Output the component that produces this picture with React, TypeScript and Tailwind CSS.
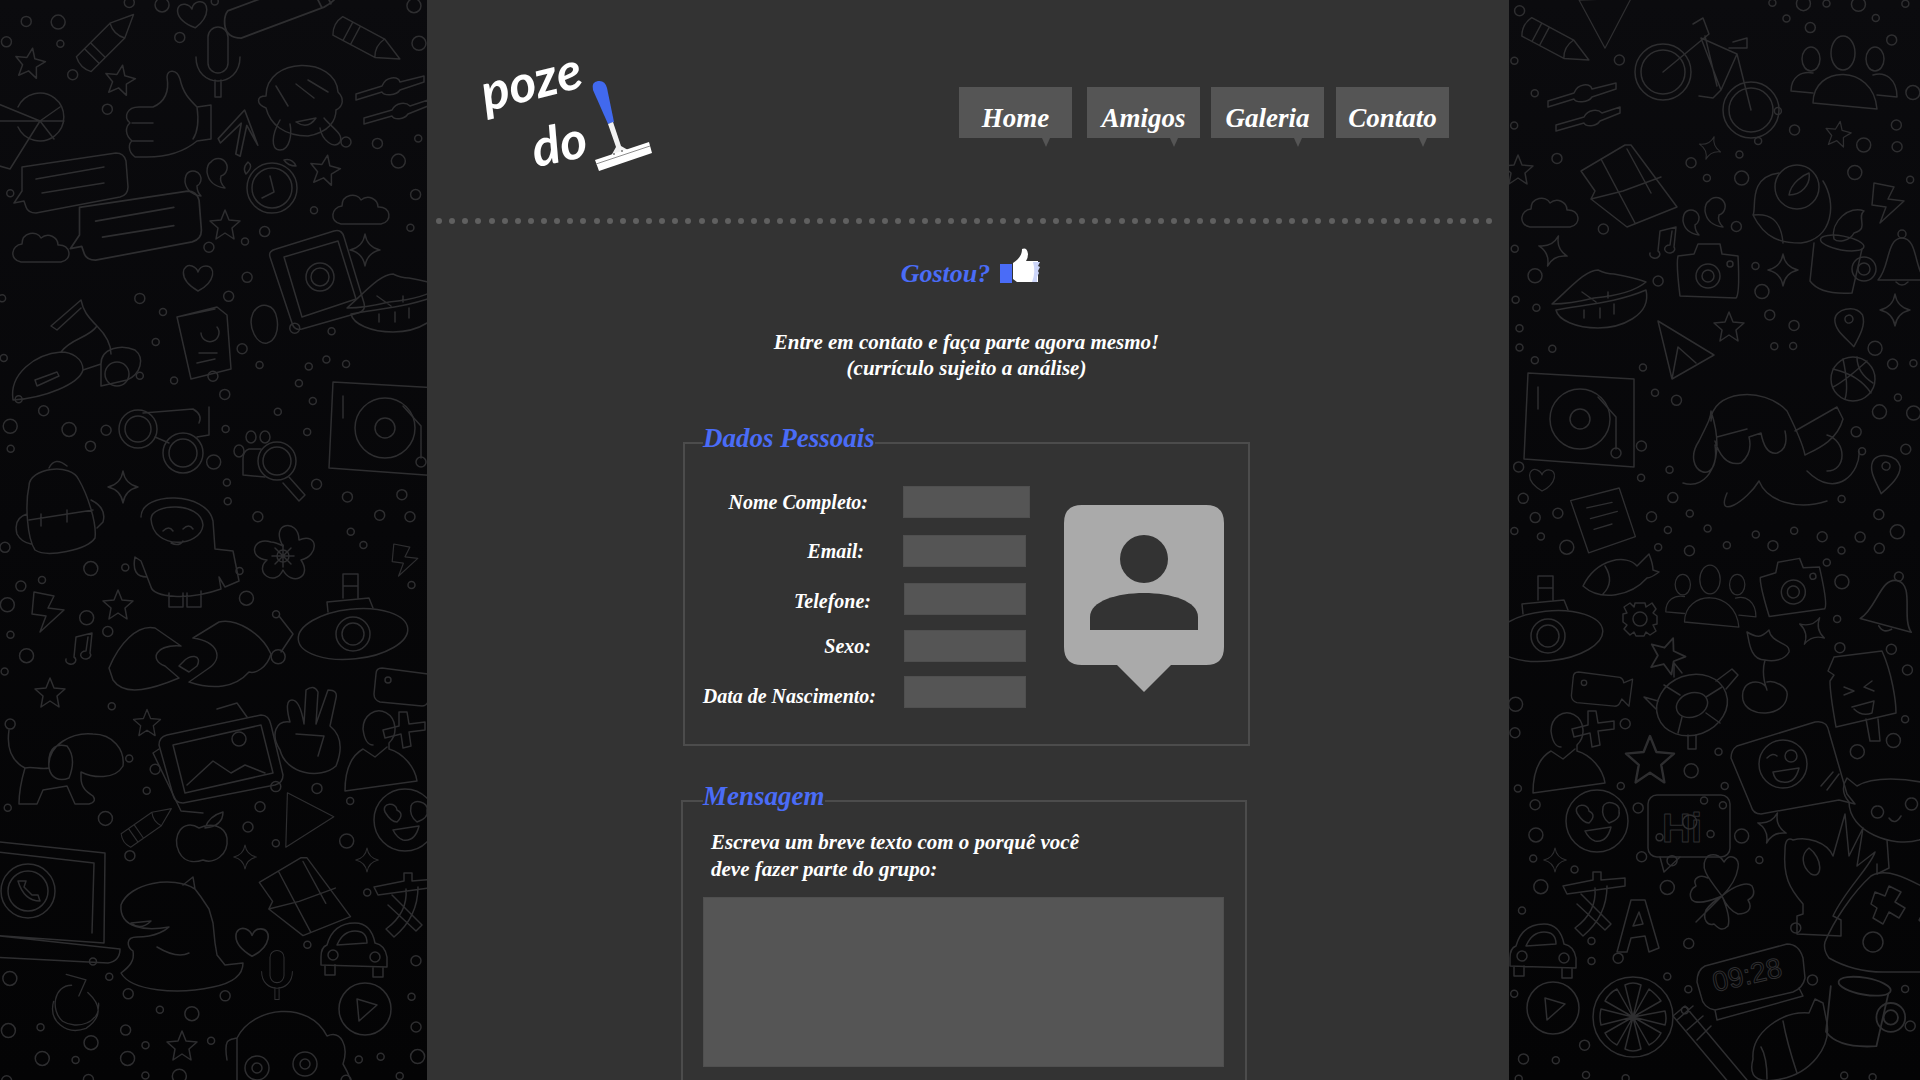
import type { ReactNode } from 'react';

const script = "font-['Liberation_Serif',serif] italic font-bold";

// doodle shapes of the wallpaper, each drawn around 0,0
const shapes: Record<string, { r: number; art: ReactNode }> = {
  star: { r: 16, art: <path d="M0 -15 L4 -5 L15 -4 L7 3 L9 14 L0 8 L-9 14 L-7 3 L-15 -4 L-4 -5Z" /> },
  sparkle: { r: 15, art: <path d="M0 -16 Q2 -3 15 0 Q2 3 0 16 Q-2 3 -15 0 Q-2 -3 0 -16Z" /> },
  heart: { r: 15, art: <path d="M0 13 C-22 0 -15 -15 -6 -12 Q-1 -10 0 -6 Q2 -12 8 -12 C18 -12 18 4 0 13Z" /> },
  cloud: { r: 30, art: <path d="M-22 14 C-34 12 -32 -3 -21 -4 C-21 -16 -6 -18 -2 -10 C5 -16 15 -11 15 -3 C28 -4 30 12 18 14Z" /> },
  pencil: { r: 32, art: <path d="M-36 -11 H14 L38 0 L14 11 H-36 Q-42 0 -36 -11Z M-24 -11 V11 M-15 -11 V11 M14 -11 Q8 0 14 11" /> },
  mic: { r: 32, art: <path d="M-10 -28 a10 10 0 0 1 20 0 V-2 a10 10 0 0 1 -20 0Z M-22 -8 C-22 24 22 24 22 -8 M-3 15 V32 H3 V15" /> },
  thumb: { r: 46, art: <path d="M-26 -8 H-12 C2 -14 4 -26 2 -38 C2 -46 12 -46 15 -36 C18 -22 24 -16 32 -8 L46 -10 V24 L32 26 C20 36 4 42 -18 42 H-30 C-38 36 -36 28 -33 26 C-40 20 -40 12 -35 8 C-42 2 -38 -8 -26 -8Z M-33 8 H-12 M-33 26 H-12 M32 -8 C34 6 32 18 28 24" /> },
  arrow: { r: 22, art: <path d="M-18 6 L6 -20 L18 12 L8 -6 L2 22 L-2 20 L3 -8 L-16 10Z" /> },
  girl: { r: 48, art: <g><path d="M-34 -4 C-34 -44 36 -44 38 -8 C44 -2 44 6 36 10 C36 20 30 32 8 36 C-16 36 -30 24 -34 8 C-44 4 -44 -4 -34 -4Z" /><path d="M-4 -16 L14 -2 M-24 -14 L-12 6 M8 -20 L28 -8 M-20 20 C-28 34 -30 50 -20 50 C-10 50 -8 34 -10 24 M24 18 C32 28 44 34 40 42 C34 50 22 40 20 28 M-4 22 Q8 30 16 18Z" /></g> },
  sliders: { r: 34, art: <path d="M-34 -6 L-8 -14 C-4 -24 8 -24 10 -18 L34 -24 V-18 L10 -10 C6 -4 -6 -4 -8 -8 L-34 0Z M-26 18 L2 10 C6 2 16 2 20 6 L38 0 V6 L18 14 C14 20 4 20 2 16 L-26 24Z" /> },
  cocktail: { r: 42, art: <path d="M-44 -22 L0 -4 L-30 44 L-44 40 M-44 -4 H-1 M0 -4 m-22 -14 a24 24 0 1 1 0 20 M0 -4 L20 -18 M0 -4 L24 -4 M0 -4 L14 14" /> },
  chat: { r: 50, art: <path d="M-50 -18 L44 -32 Q52 -32 54 -24 L56 2 Q56 10 48 12 L-36 28 Q-44 28 -46 22 L-48 16 L-58 18 L-50 6Z M-36 -6 L32 -18 M-30 8 L32 -2" /> },
  phone: { r: 44, art: <g><path d="M-36 -26 L22 -44 Q30 -46 32 -38 L52 28 Q54 36 46 38 L-10 54 Q-18 56 -20 48 L-42 -18 Q-44 -24 -36 -26Z M-28 -18 L26 -34 L44 24 L-10 42Z" /><circle cx="8" cy="2" r="14" /><circle cx="8" cy="2" r="9" /></g> },
  clock: { r: 30, art: <g><circle r="25" /><circle r="20" /><path d="M-2 -12 L2 4 L-10 10 M-24 -26 Q-30 -20 -26 -14 Q-18 -22 -24 -26Z M12 -28 Q20 -30 24 -22 Q16 -22 12 -28Z" /></g> },
  quotes: { r: 22, art: <path d="M-16 -6 a8 8 0 1 1 8 14 Q-8 14 -4 18 Q-18 16 -20 4 Q-20 -4 -16 -6Z M6 -16 a9 9 0 1 1 10 14 Q14 4 20 10 Q4 8 2 -6 Q2 -14 6 -16Z" /> },
  scooter: { r: 62, art: <g><path d="M-62 60 C-66 34 -40 14 -14 12 C-4 12 8 18 8 30 C4 44 -30 58 -62 60Z M-40 40 L-18 32 L-16 36 L-38 46Z M-14 12 C-4 -2 14 -2 22 -14 C12 -24 8 -30 6 -40 L-24 -14 L-18 -10 L6 -32 M22 -14 C30 -6 36 4 36 14 M8 30 L26 24 M26 24 C26 8 46 4 60 10 C70 18 66 34 52 40 L26 46Z" /><circle cx="42" cy="34" r="12" /></g> },
  passport: { r: 28, art: <path d="M-26 -18 L14 -28 L24 -20 L28 34 L-12 44 L-26 -18Z M-26 -18 L12 -26 M-6 28 L12 24 M-2 -2 a9 9 0 1 0 16 -6 M-4 18 H14" /> },
  egg: { r: 18, art: <path d="M-12 -12 C-6 -24 10 -22 12 -6 C14 6 10 16 2 18 C-8 20 -18 2 -12 -12Z" /> },
  lips: { r: 48, art: <path d="M-48 8 C-28 -10 -14 -26 -2 -26 Q6 -22 14 -22 Q36 -18 46 -14 C34 -4 16 0 -6 2 Q-30 8 -48 8Z M-44 14 C-10 8 18 6 46 -6 C52 20 20 32 -2 32 C-24 32 -42 24 -44 14Z M-18 -4 L-4 6 M8 -4 V2 M-16 14 V22 M0 12 V22 M14 8 V18" /> },
  glasses: { r: 42, art: <g><circle cx="-25" cy="-10" r="13" /><circle cx="-25" cy="-10" r="19" /><circle cx="20" cy="14" r="14" /><circle cx="20" cy="14" r="20" /><path d="M-20 -26 L30 -30 Q40 -24 36 -16 M-8 -2 L6 4 M34 -2 L46 -4 V-32" /></g> },
  magnifier: { r: 32, art: <g><circle cx="4" cy="-4" r="14" /><circle cx="4" cy="-4" r="19" /><path d="M16 12 L32 30 L26 36 L10 18 M-12 -16 H-24 Q-30 -14 -30 -6 V10 L-8 12" /><ellipse cx="-34" cy="-14" rx="5" ry="6" /><ellipse cx="-22" cy="-28" rx="5" ry="6" /><ellipse cx="-8" cy="-28" rx="5" ry="6" /></g> },
  turntable: { r: 58, art: <g><path d="M-50 -44 L56 -38 V50 L-54 42Z" /><circle cx="2" cy="2" r="30" /><circle cx="2" cy="2" r="10" /><path d="M-40 -30 V-8 M20 -20 L38 0 V32" /><circle cx="38" cy="36" r="5" /></g> },
  backpack: { r: 50, art: <path d="M-34 -22 C-34 -40 8 -46 16 -28 C24 -14 34 14 32 30 C24 42 -16 50 -28 42 C-36 30 -38 -4 -34 -22Z M-34 12 L30 2 M-22 6 V18 M4 2 V14 M-14 -40 Q-8 -52 4 -42 M-36 6 Q-50 10 -46 26 Q-42 34 -32 36 M28 -8 Q44 0 40 14 L34 20" /> },
  bar: { r: 40, art: <path d="M-46 -4 L36 -22 Q48 -20 50 -10 Q46 0 34 4 L-38 20 Q-50 18 -50 8 Q-50 0 -46 -4Z M24 -20 L32 4 M32 -22 L40 2" /> },
  astro: { r: 46, art: <path d="M-36 -30 C-36 -56 30 -56 36 -26 L38 2 L56 4 L62 34 L48 40 L42 30 L44 42 C10 54 -24 50 -26 40 L-36 14 L-42 10 Q-46 30 -30 30 M-26 -28 C-26 -44 24 -46 26 -22 C24 0 -24 4 -26 -28Z M-14 -16 Q-8 -22 -4 -16 M6 -18 Q12 -24 16 -18 M-6 -4 Q2 0 6 -6 M-8 46 V60 H6 V46 M10 46 V60 H24 V44" /> },
  flower: { r: 32, art: <g><path d="M0 -10 C-14 -34 16 -38 16 -16 C36 -24 36 0 18 4 C30 22 8 30 0 14 C-8 32 -30 16 -16 4 C-36 2 -30 -20 -12 -14 Q-8 -14 0 -10Z" /><circle r="6" /><path d="M-11 0 H11 M0 -11 V11 M-8 -8 L8 8 M8 -8 L-8 8" /></g> },
  sub: { r: 62, art: <g><ellipse rx="55" ry="25" cx="0" cy="0" transform="rotate(-6)" /><circle r="17" /><circle r="11" /><path d="M-25 -22 L-26 -32 L16 -36 L20 -26 M-10 -36 V-60 H5 V-36 M-60 0 L-74 -18 M-60 0 L-72 18 M-10 -48 H5" /></g> },
  bolt: { r: 18, art: <path d="M-14 -20 L6 -16 L0 -4 L16 -2 L-8 20 L-2 4 L-16 2Z" /> },
  note: { r: 16, art: <path d="M-12 12 a5 4 0 1 0 8 -2 L-2 -10 L14 -14 L12 6 a5 4 0 1 1 -4 -2 L10 -10" /> },
  hands: { r: 70, art: <path d="M-76 8 C-66 -16 -48 -36 -30 -32 L-4 -14 C-30 -16 -36 0 -20 6 L-6 18 C-30 28 -60 38 -72 20Z M86 -6 C76 -28 50 -42 34 -38 L8 -22 C34 -18 38 -2 24 8 L4 22 C28 30 50 28 64 12 C70 14 82 8 86 -6Z M-2 2 C4 -6 18 -6 12 6 L4 12 L-6 6Z" /> },
  dog: { r: 54, art: <path d="M-54 -34 Q-58 -6 -38 4 C-30 2 -22 6 -14 4 C-16 -20 10 -32 30 -30 C50 -30 62 -14 60 2 C52 16 30 14 18 8 L18 14 C18 24 24 28 30 32 Q34 38 26 40 H12 L4 22 L-20 26 L-26 40 H-44 Q-44 24 -38 4 M-14 4 C-16 -20 -4 -20 4 -18 C12 -8 10 4 6 14 C-4 18 -12 14 -14 4Z" /> },
  picture: { r: 52, art: <g><path d="M-50 -16 L44 -36 Q52 -36 54 -26 L66 24 Q66 32 58 34 L-34 52 Q-42 52 -44 44 L-58 -6 Q-58 -14 -50 -16Z M-44 -6 L44 -26 L56 22 L-32 42Z M-30 34 L-4 10 L14 22 L28 14 L48 22" /><circle cx="22" cy="-12" r="7" /><path d="M-58 -2 L-64 2 L-36 60 L-14 62 M30 -34 L20 -48 L0 -42" /></g> },
  peace: { r: 38, art: <path d="M-20 -12 Q-26 -34 -18 -34 Q-10 -34 -6 -10 L-4 -44 Q4 -50 8 -42 L6 -10 L18 -44 Q28 -44 26 -36 L20 -8 C30 0 34 12 26 32 C10 46 -24 40 -30 16 C-40 0 -34 -14 -20 -12Z M-14 0 L14 2 L8 22" /> },
  person: { r: 38, art: <path d="M-14 -22 a16 18 0 1 1 26 14 L12 -2 C26 2 38 16 40 30 L-32 40 C-32 22 -28 6 -14 -2 L-2 6 L10 -4 M-14 -22 Q-12 -6 -4 -6" /> },
  plus: { r: 18, art: <path d="M-4 -18 L4 -18 L6 -6 L22 -8 L22 0 L6 2 L8 16 L0 18 L-2 4 L-18 8 L-20 0 L-4 -4Z" /> },
  video: { r: 28, art: <g><path d="M-32 -14 Q-32 -20 -26 -20 L20 -14 Q24 -12 24 -8 L34 -12 L30 18 L22 10 L20 14 Q18 18 14 18 L-28 14 Q-34 12 -34 6Z" /><circle cx="-20" cy="-8" r="3" /></g> },
  face: { r: 32, art: <g><circle r="31" /><path d="M-20 -8 C-24 -18 -8 -18 -8 -10 Q0 -6 -8 2 Q-14 2 -20 -8Z M6 -14 C8 -22 24 -18 22 -10 Q24 -2 12 2 Q4 -4 6 -14Z M-12 10 L14 6 Q10 22 -2 20 Q-8 18 -12 10Z" /></g> },
  apple: { r: 24, art: <path d="M-4 -10 C-20 -20 -32 -2 -24 14 C-18 26 -6 24 0 22 C10 26 26 18 24 0 C22 -12 8 -16 -4 -10Z M2 -10 Q6 -22 20 -26 Q20 -12 2 -10" /> },
  tri: { r: 26, art: <path d="M-22 -34 L36 -4 L-24 34Z" /> },
  map: { r: 44, art: <path d="M-46 -8 L-2 -34 L4 -34 L50 28 L0 48 L-36 20 L-32 12Z M-26 -20 L-8 14 L8 44 M0 -30 L24 14 M-36 20 L-4 12 L34 -2" /> },
  laptop: { r: 66, art: <g><path d="M-60 -58 L55 -46 L54 44 L-60 36 M-60 -48 L44 -36 L42 34 M-60 36 L70 50 Q70 62 58 64 L-60 58" /><circle cx="-22" cy="-8" r="27" /><circle cx="-22" cy="-8" r="20" /><path d="M-32 -18 Q-26 2 -10 2 L-12 -4 L-18 -4 L-26 -12 L-24 -18Z" /></g> },
  dino: { r: 66, art: <path d="M-56 -28 C-48 -50 -4 -58 18 -44 L24 -36 L32 -24 L36 -10 L38 10 L40 22 L48 32 L66 30 Q66 48 36 54 C0 62 -46 58 -56 40 C-48 34 -42 28 -44 18 C-50 14 -52 4 -40 4 C-20 4 -10 -4 -8 -6 C-30 -2 -58 -4 -56 -28Z M-46 -10 Q-36 -2 -26 -12Z M-20 14 Q0 26 12 20 M18 -44 L16 -56 L6 -48" /> },
  car: { r: 34, art: <g><path d="M-26 -4 Q-20 -26 2 -26 Q18 -26 22 -6 Q32 -4 34 8 V18 L-32 16 V8 Q-32 -2 -26 -4Z M-16 -4 Q-10 -18 2 -18 Q14 -18 14 -6Z M-28 16 V26 H-18 V16 M20 18 V28 H30 V18" /><circle cx="-20" cy="6" r="5" /><circle cx="22" cy="8" r="5" /></g> },
  playBtn: { r: 28, art: <g><circle r="26" /><path d="M-8 -10 L12 -4 L-6 12Z" /></g> },
  loop: { r: 30, art: <path d="M-6 -22 C-26 -22 -30 6 -16 18 C0 28 26 20 24 -2 M-12 -34 L10 -28 L2 -10 M12 -14 Q36 8 10 26 C-12 34 -32 18 -26 -4" /> },
  monkey: { r: 58, art: <g><path d="M-56 10 C-60 -14 -52 -10 -46 -12 C-30 -44 26 -50 44 -14 C58 -20 66 -4 60 14 C70 30 70 40 76 56 M-46 -12 V60" /><circle cx="-26" cy="18" r="12" /><circle cx="22" cy="14" r="12" /><circle cx="-26" cy="18" r="5" /><circle cx="22" cy="14" r="5" /></g> },
  translate: { r: 26, art: <path d="M-34 -12 L-4 -18 V-26 H4 L4 -18 L28 -20 V-12 L-30 -4Z M-16 -4 L14 26 L8 32 L-20 6 M10 -12 Q10 18 -14 38 L-22 30 Q0 14 -2 -10" /> },
  letterA: { r: 24, art: <path d="M-20 30 L-6 -22 H8 L22 26 L12 30 L8 14 L-6 16 L-10 30Z M-4 4 L6 2 L2 -10Z" /> },
  bike: { r: 72, art: <g><circle cx="-40" cy="0" r="28" /><circle cx="-40" cy="0" r="22" /><circle cx="48" cy="38" r="28" /><circle cx="48" cy="38" r="22" /><path d="M-40 0 L6 -38 L0 -54 L-10 -48 M-2 -34 L34 -18 L18 18 Z M2 -36 L14 14 M18 18 L10 26 L-4 24 M34 -18 L48 38 M30 -30 L44 -34 L44 -24 L26 -24" /></g> },
  people: { r: 52, art: <g><ellipse cy="-30" rx="12" ry="17" /><ellipse cx="-32" cy="-24" rx="9" ry="12" /><ellipse cx="32" cy="-24" rx="9" ry="12" /><path d="M-30 20 C-30 -18 30 -20 34 26Z M-30 10 L-52 8 C-52 -6 -42 -12 -30 -10 M34 12 L54 14 C54 -4 42 -12 30 -8" /></g> },
  duck: { r: 44, art: <g><circle cx="4" cy="-16" r="22" /><path d="M-14 -30 C-46 -26 -36 6 -40 12 C-28 36 -12 40 8 40 C40 36 44 0 30 -22 M-40 12 C-24 10 -12 16 -10 40 M-4 -8 C-2 -20 10 -28 16 -30 C18 -18 8 -8 -4 -8Z" /></g> },
  camera: { r: 34, art: <g><path d="M-30 -18 L-14 -20 L-10 -30 L12 -30 L14 -20 L30 -18 Q32 20 28 24 L-28 22 Q-32 -10 -30 -18Z" /><circle cy="2" r="12" /><circle cy="2" r="6" /><circle cx="22" cy="-10" r="3" /></g> },
  mug: { r: 32, art: <g><ellipse cx="-2" cy="-24" rx="22" ry="7" transform="rotate(10)" /><path d="M-26 -24 L-30 14 Q-20 28 12 26 L22 -18" /><circle cx="24" cy="2" r="12" /><circle cx="24" cy="2" r="6" /></g> },
  bell: { r: 28, art: <g><circle cy="-24" r="4" /><path d="M-24 22 C-12 10 -16 -20 0 -20 C16 -20 12 12 24 22Z M-6 24 Q0 30 6 24" /></g> },
  pin: { r: 18, art: <g><path d="M0 22 C-8 10 -16 2 -14 -8 C-12 -18 8 -20 14 -8 C16 2 8 12 0 22Z" /><circle cy="-6" r="4" /></g> },
  plane: { r: 28, art: <path d="M-22 -30 L34 4 L-8 28Z M-8 28 L-2 -4 L16 12" /> },
  octopus: { r: 78, art: <path d="M-56 -20 C-56 -50 -4 -56 20 -30 C28 -14 36 4 38 14 C50 8 70 0 76 -22 L70 -34 L28 -10 M-50 -4 L-20 -12 M-52 0 Q-44 26 -26 22 Q-14 12 -18 -4 L-6 -8 Q-2 14 10 12 Q22 8 18 -10 M-52 4 C-46 50 -88 30 -68 0 C-58 -20 -56 -24 -56 -30 C-40 20 -60 50 -84 42 M40 30 C70 60 94 30 92 10 M60 -6 C80 0 80 30 60 30 M-40 52 C-52 80 -20 60 -8 40 C0 60 30 70 60 60" /> },
  ball: { r: 24, art: <g><circle r="22" /><path d="M-20 -10 Q6 -4 18 14 M-10 -20 Q-4 8 -8 20 M14 -18 Q-8 2 -20 8 M4 -22 Q4 -6 20 4" /></g> },
  card: { r: 36, art: <path d="M-36 -16 L18 -30 L36 24 L-16 42 Z M-18 -8 L10 -14 M-14 4 L16 -4 M-10 16 L10 10" /> },
  fish: { r: 34, art: <path d="M-34 10 C-20 -18 10 -22 20 -10 L32 -22 Q36 -12 36 -6 L42 -4 Q34 2 30 2 C14 20 -16 26 -34 10Z M-12 -10 Q-2 6 -14 18" /> },
  gear: { r: 20, art: <g><circle r="7" /><path d="M-5 -16 H5 L6 -12 L12 -16 L16 -10 L13 -6 L17 -3 V5 L13 6 L16 12 L10 16 L6 13 L4 17 H-4 L-6 13 L-10 16 L-16 10 L-13 6 L-17 3 V-5 L-13 -6 L-16 -12 L-10 -16 L-6 -12Z" /></g> },
  turtle: { r: 44, art: <g><ellipse rx="36" ry="30" transform="rotate(-20)" /><ellipse rx="16" ry="12" transform="rotate(-20)" /><path d="M-12 -10 L-28 -20 M14 -8 L30 -18 M14 8 L28 18 M-10 12 L-14 28 M24 -24 L40 -36 L46 -30 L34 -16 M-34 -4 L-48 -8 L-36 4 M-4 30 V44 H4 V30 M-18 -28 V-42 L-10 -32" /></g> },
  tulip: { r: 38, art: <path d="M2 -14 C-14 -14 -14 -36 -16 -42 C-6 -36 -2 -36 6 -44 C8 -30 28 -32 26 -22 C22 -14 10 -12 2 -14 Q-2 0 4 16 C2 4 -24 4 -20 26 C-16 44 22 44 24 22 C26 12 10 6 4 8" /> },
  popsicle: { r: 40, art: <path d="M-26 -38 L22 -44 C32 -22 36 6 36 18 L-24 32 C-26 20 -30 0 -30 -14 L-26 -20 L-32 -24Z M6 24 L10 46 L20 46 L18 24 M-16 -8 L-6 -4 L-16 0 M12 -14 L4 -8 L14 -4 M-8 12 L14 6 L12 18 Q2 22 -6 14" /> },
  bubble: { r: 50, art: <g><path d="M-46 -18 L32 -42 Q44 -44 46 -32 L64 30 L72 40 L56 36 L-22 50 Q-30 50 -32 42 L-52 -6 Q-52 -14 -46 -18Z" /><circle cx="0" cy="0" r="24" /><circle cx="8" cy="-8" r="6" /><path d="M-16 -6 Q-10 -12 -6 -8 M-10 8 L16 4 Q12 20 0 18 Q-8 18 -10 8Z M38 22 L50 8 M44 26 L56 10" /></g> },
  cat: { r: 50, art: <path d="M-36 -26 L-46 -34 Q-54 -22 -44 -10 C-44 20 0 36 26 28 C50 20 56 0 50 -18 L56 -36 L36 -28 C14 -34 -20 -36 -36 -26Z M-6 28 L-4 56 L-16 62 V52 M-16 -6 a6 6 0 1 0 1 0 M18 -14 a6 6 0 1 0 1 0 M-4 6 Q2 14 8 4" /> },
  ok: { r: 50, art: <path d="M-34 -30 Q-42 -34 -42 -20 C-44 6 -38 18 -24 34 L-24 44 L-30 46 V64 L14 66 V50 L6 46 C18 20 44 -4 48 -18 L30 -4 L36 -42 L22 -14 L18 -56 L6 -14 C0 -28 -20 -34 -34 -30Z M-18 -22 C-4 -12 -4 10 -16 4 C-26 -4 -26 -16 -18 -22Z" /> },
  clover: { r: 42, art: <path d="M0 0 C-14 -18 -24 -30 -14 -40 C-6 -44 0 -38 2 -34 C8 -44 18 -38 16 -28 Q14 -14 0 0 C14 -12 26 -14 30 -10 C34 -2 30 2 26 4 C32 14 24 18 16 18 Q6 14 0 0 C6 14 8 24 6 30 C0 36 -4 32 -8 28 C-14 30 -20 24 -16 14 Q-10 6 0 0 C-14 6 -26 8 -30 4 C-34 -2 -30 -8 -26 -10 C-30 -18 -22 -22 -14 -18 M0 0 L-26 26" /> },
  pad: { r: 58, art: <g><path d="M-58 20 C-50 0 -30 -30 -12 -46 C6 -56 30 -40 50 -30 L52 50 H0 C-24 50 -40 44 -54 36 Q-60 28 -58 20Z" /><path d="M-12 -18 L-8 -30 L2 -26 L6 -36 L18 -30 L12 -20 L22 -14 L16 -4 L6 -10 L0 2 L-10 -4 L-6 -14Z" /><circle cx="-10" cy="20" r="10" /><path d="M36 -2 L44 -16 L50 -12 L40 2Z" /></g> },
  alarm: { r: 46, art: <g><path d="M-48 -8 L34 -30 Q46 -30 50 -16 L52 4 Q50 14 40 18 L-38 36 Q-50 34 -52 22 L-56 8 Q-56 -4 -48 -8Z M-38 36 L-36 46 L50 22 L46 14" /></g> },
  lemon: { r: 42, art: <g><circle r="40" /><path d="M0 0 L-8 -32 Q0 -36 8 -32Z M0 0 L16 -28 Q24 -22 28 -16Z M0 0 L32 -6 Q34 2 32 8Z M0 0 L28 16 Q24 24 16 28Z M0 0 L8 32 Q0 36 -8 32Z M0 0 L-16 28 Q-24 24 -28 16Z M0 0 L-32 8 Q-34 0 -32 -8Z M0 0 L-28 -16 Q-24 -24 -16 -28Z" /></g> },
  croissant: { r: 42, art: <path d="M-34 16 C-36 -10 -6 -32 22 -30 L28 -44 L36 -40 L40 -20 C44 4 24 30 -6 36 C-24 40 -40 38 -34 16Z M-20 36 Q-20 14 -26 4 M10 30 Q0 0 -4 -22" /> },
  brush: { r: 30, art: <path d="M-34 -30 L-22 -40 L40 34 L28 44Z M-30 -26 L-14 -40 M-20 -16 L-4 -30 M-10 -6 L4 -20" /> },
  bean: { r: 18, art: <path d="M-16 14 C-20 -4 0 -20 14 -14 C6 -8 20 4 4 8 C0 16 -12 18 -16 14Z" /> },
};

const doodles: [string, number, number, number?, number?][] = [
  // left side
  ['heart', 193, 15, -10], ['pencil', 108, 40, -45, 0.95], ['bar', 283, 8, -8, 1.2], ['pencil', 368, 42, 28, 0.95],
  ['star', 30, 63, 10], ['star', 120, 80, 10], ['star', 225, 225, 0], ['star', 325, 170, 10], ['mic', 218, 65],
  ['thumb', 165, 115], ['arrow', 238, 132, 0, 1.1], ['girl', 300, 100], ['sliders', 390, 100], ['cocktail', 40, 125],
  ['chat', 72, 185], ['chat', 137, 228, 0, 1.15], ['quotes', 205, 178], ['clock', 272, 188], ['phone', 312, 275],
  ['cloud', 363, 210], ['cloud', 43, 248], ['scooter', 75, 340], ['passport', 203, 335], ['egg', 265, 325],
  ['heart', 198, 278], ['sparkle', 365, 250], ['lips', 395, 300],
  ['glasses', 163, 439], ['magnifier', 273, 465], ['turntable', 383, 426], ['backpack', 63, 508], ['sparkle', 123, 487],
  ['astro', 177, 547], ['flower', 283, 556], ['sub', 353, 634], ['bolt', 48, 612], ['star', 118, 605], ['note', 78, 647],
  ['hands', 185, 660], ['dog', 63, 764], ['star', 50, 693], ['star', 147, 723, 0, 0.9], ['picture', 217, 751],
  ['peace', 310, 734], ['person', 377, 751], ['plus', 403, 730], ['video', 408, 688], ['face', 405, 820],
  ['pencil', 148, 825, -35, 0.75], ['apple', 203, 838], ['tri', 305, 820, 0, 0.8], ['sparkle', 245, 857, 0, 0.75],
  ['sparkle', 367, 860, 0, 0.75], ['map', 303, 890, 0, 0.95], ['laptop', 50, 899], ['dino', 177, 933], ['heart', 252, 942, 0, 1.1],
  ['car', 353, 949], ['mic', 277, 977, 0, 0.7], ['playBtn', 365, 1009], ['loop', 77, 1005, 0, 0.9], ['star', 182, 1046],
  ['monkey', 283, 1050], ['translate', 408, 899], ['bolt', 405, 560, 0, 0.8],
  // right side
  ['pencil', 1557, 43, 28, 0.95], ['tri', 1608, 15, -30, 0.8], ['sliders', 1582, 107], ['bike', 1703, 72], ['people', 1843, 83],
  ['map', 1627, 179], ['star', 1838, 134, 10, 0.85], ['sparkle', 1710, 148, 20, 0.75], ['cloud', 1552, 213], ['quotes', 1703, 217],
  ['duck', 1793, 203], ['note', 1662, 241], ['lips', 1600, 296], ['camera', 1708, 274], ['sparkle', 1783, 270], ['sparkle', 1895, 310],
  ['sparkle', 1553, 251, 20], ['mug', 1840, 267], ['bell', 1902, 258], ['star', 1729, 327], ['pin', 1850, 325, -10], ['pin', 1885, 472, 10],
  ['turntable', 1578, 417], ['plane', 1680, 351], ['octopus', 1767, 441], ['ball', 1853, 379], ['heart', 1542, 480, 0, 0.85],
  ['card', 1603, 515, 0, 0.9], ['bolt', 1888, 203], ['star', 1518, 170], ['bean', 1850, 225],
  ['sub', 1548, 636], ['fish', 1617, 576], ['gear', 1640, 619], ['people', 1710, 605, 0, 0.85], ['camera', 1793, 590, -10], ['bell', 1892, 602, 15, 1.1],
  ['star', 1667, 655, 20, 1.2], ['sparkle', 1812, 631, 30, 0.95], ['video', 1602, 690, 0, 0.9], ['turtle', 1692, 705], ['tulip', 1763, 674],
  ['popsicle', 1860, 695], ['person', 1565, 753], ['plus', 1592, 729], ['star', 1650, 760, 0, 1.6], ['bubble', 1783, 764],
  ['face', 1597, 821], ['sparkle', 1772, 828, 20], ['sparkle', 1555, 860, 0, 0.75], ['cat', 1893, 812], ['ok', 1827, 870],
  ['translate', 1597, 898], ['letterA', 1637, 922], ['clover', 1722, 896], ['car', 1542, 950], ['pad', 1883, 922],
  ['alarm', 1753, 974], ['playBtn', 1553, 1008], ['lemon', 1633, 1017], ['mug', 1862, 1015, 0, 1.2], ['croissant', 1787, 1043], ['brush', 1707, 1046],
];

// small rings scattered in the gaps between the doodles
const rings: [number, number, number][] = (() => {
  const out: [number, number, number][] = [];
  let seed = 7;
  const rnd = () => {
    seed = (seed * 16807) % 2147483647;
    return seed / 2147483647;
  };
  for (let x = 6; x < 1920; x += 17) {
    if (x > 424 && x < 1512) continue;
    for (let y = 6; y < 1080; y += 17) {
      const cx = x + rnd() * 10 - 5;
      const cy = y + rnd() * 10 - 5;
      const r = rnd() > 0.75 ? 7 : rnd() > 0.5 ? 5 : 3.5;
      if (rnd() > 0.6) continue;
      if ((cx > 420 && cx < 1512) || cx > 1916) continue;
      const hit = doodles.some(([n, dx, dy, , s]) => Math.hypot(cx - dx, cy - dy) < shapes[n].r * (s ?? 1) + r + 6);
      const near = out.some(([ox, oy, or]) => Math.hypot(cx - ox, cy - oy) < or + r + 11);
      if (!hit && !near) out.push([cx, cy, r]);
    }
  }
  return out;
})();

function Wallpaper() {
  return (
    <svg
      className="absolute inset-0 w-full h-full"
      viewBox="0 0 1920 1080"
      fill="none"
      stroke="#2e2e30"
      strokeWidth="1.5"
      strokeLinejoin="round"
      strokeLinecap="round"
    >
      {doodles.map(([name, x, y, rot, scale], i) => (
        <g key={i} transform={`translate(${x} ${y}) rotate(${rot ?? 0}) scale(${scale ?? 1})`}>
          {shapes[name].art}
        </g>
      ))}
      {rings.map(([x, y, r], i) => (
        <circle key={i} cx={x} cy={y} r={r} />
      ))}
      <g strokeWidth="1">
        <text x="1662" y="842" fontFamily="Liberation Sans, sans-serif" fontSize="40" fontWeight="700">Hi</text>
        <text x="1712" y="983" fontFamily="Liberation Sans, sans-serif" fontSize="28" transform="rotate(-13 1753 974)">09:28</text>
      </g>
      <rect x="1648" y="795" width="82" height="62" rx="9" />
      <path d="M1660 857 L1664 872 L1680 857" />
    </svg>
  );
}

function Squeegee() {
  return (
    <svg viewBox="590 78 64 96" className="w-16 h-24 shrink-0" aria-hidden="true">
      <path d="M592 90 Q590 82 597 81 Q604 80 606 88 L613 122 L607 124 Z" fill="#4169ee" />
      <path d="M607 124 L612 122 L620 146 L627 150 L610 156 L615 147 Z" fill="#f2f2f2" />
      <path d="M594 160 L648 142 L651 153 L598 171 Z" fill="#fff" />
      <path d="M595 164 L649 146" stroke="#8d8d8d" strokeWidth="1" />
      <circle cx="613" cy="154" r="1" fill="#777" />
      <circle cx="621" cy="151" r="1" fill="#777" />
    </svg>
  );
}

function ThumbUp() {
  return (
    <svg viewBox="0 0 40 36" className="w-10 h-9 shrink-0" aria-hidden="true">
      <rect x="0" y="16" width="12" height="19" fill="#4a6cf7" />
      <path d="M13 15 C19 11 22 7 22 1 Q27 -1 28 6 Q28 10 26 13 H38 V34 H17 L13 31Z" fill="#fff" />
      <path d="M33 14 H40 L38 18 L40 19 L38 23 L39 25 L37 29 L37 34 H32 Q36 24 33 14Z" fill="#cdd6fa" />
    </svg>
  );
}

function AvatarPin() {
  return (
    <svg viewBox="0 0 160 187" className="w-40 h-[187px] shrink-0" aria-hidden="true">
      <path d="M18 0 H142 Q160 0 160 18 V142 Q160 160 142 160 H107 L80 187 L53 160 H18 Q0 160 0 142 V18 Q0 0 18 0Z" fill="#aaaaaa" />
      <ellipse cx="80" cy="54" rx="24" ry="24" fill="#333333" />
      <path d="M26 125 V112 C26 80 134 80 134 112 V125 Z" fill="#333333" />
    </svg>
  );
}

const navItems = [
  { label: 'Home', gap: 'mr-[15px]' },
  { label: 'Amigos', gap: 'mr-[11px]' },
  { label: 'Galeria', gap: 'mr-3' },
  { label: 'Contato', gap: '' },
];

const fields = [
  { label: 'Nome Completo:', labelCls: 'w-[218px] pr-[35px]', inputCls: 'w-[127px]', rowCls: 'mb-[17px]' },
  { label: 'Email:', labelCls: 'w-[218px] pr-[39px]', inputCls: 'w-[123px]', rowCls: 'mb-4' },
  { label: 'Telefone:', labelCls: 'w-[219px] pr-[33px] pt-0.5', inputCls: 'w-[122px]', rowCls: 'mb-[13px]' },
  { label: 'Sexo:', labelCls: 'w-[219px] pr-[33px]', inputCls: 'w-[122px]', rowCls: 'mb-3.5' },
  { label: 'Data de Nascimento:', labelCls: 'w-[219px] pr-7 pt-1', inputCls: 'w-[122px]', rowCls: '' },
];

export default function App() {
  return (
    <div className="relative h-screen overflow-hidden bg-gradient-to-b from-[#0b0b0e] to-[#040405]">
      <Wallpaper />
      <main className={`relative ml-[427px] w-[1082px] h-full bg-[#333333] text-white overflow-hidden ${script}`}>
        <header className="flex justify-between pl-[54px] pr-[60px] h-[218px]">
          <div className="flex pt-[62px]">
            <div className="w-[118px] font-['Lato',sans-serif] not-italic">
              <div className="w-fit text-[52px] leading-[28px] mt-4 font-bold italic -rotate-[14deg] origin-left">poze</div>
              <div className="w-fit text-[52px] leading-[28px] font-bold italic -rotate-[12deg] ml-[50px] mt-[22px]">do</div>
            </div>
            <div className="pt-4 -ml-[8px]">
              <Squeegee />
            </div>
          </div>
          <nav className="flex items-start pt-[87px]">
            {navItems.map((item) => (
              <a
                key={item.label}
                className={`relative flex justify-center items-center pt-3 w-[113px] h-[51px] bg-[#555555] text-[27px] ${item.gap}`}
              >
                {item.label}
                <span className="absolute right-[22px] top-full border-x-[4px] border-t-[9px] border-x-transparent border-t-[#555555]" />
              </a>
            ))}
          </nav>
        </header>

        <div className="flex justify-between w-[1056px] ml-[9px]">
          {Array.from({ length: 81 }).map((_, i) => (
            <span key={i} className="w-1.5 h-1.5 rounded-full bg-[#606060]" />
          ))}
        </div>

        <div className="ml-[256px] w-[567px]">
          <div className="flex justify-center items-start gap-2.5 pt-6 pl-2">
            <h2 className="text-[26px] leading-9 pt-2 text-[#4a6cf7]">Gostou?</h2>
            <ThumbUp />
          </div>

          <p className="mt-[37px] text-center text-[21px] leading-[26px]">
            Entre em contato e faça parte agora mesmo!
            <br />
            (currículo sujeito a análise)
          </p>

          <fieldset className="mt-[46px] h-[319px] border-2 border-[#4c4c4c]">
            <legend className="ml-[18px] text-[27px] leading-8 text-[#4a6cf7] -translate-y-[5px]">Dados Pessoais</legend>
            <div className="flex pt-[27px]">
              <form className="w-[345px]">
                {fields.map((f) => (
                  <div key={f.label} className={`flex items-start ${f.rowCls}`}>
                    <label className={`text-[20px] leading-8 text-right whitespace-nowrap ${f.labelCls}`}>{f.label}</label>
                    <input className={`h-8 bg-[#555555] border border-[#4f4f4f] ${f.inputCls}`} />
                  </div>
                ))}
              </form>
              <div className="ml-[34px] pt-[19px]">
                <AvatarPin />
              </div>
            </div>
          </fieldset>

          <fieldset className="mt-[39px] -ml-0.5 w-[566px] h-[400px] border-2 border-[#4c4c4c] px-[20px]">
            <legend className="text-[27px] leading-8 text-[#4a6cf7] -translate-y-[5px]">Mensagem</legend>
            <p className="pl-2 pt-3 text-[21px] leading-[27px]">
              Escreva um breve texto com o porquê você
              <br />
              deve fazer parte do grupo:
            </p>
            <textarea className="block mt-[14px] w-[521px] h-[170px] bg-[#555555] border border-[#4f4f4f] resize-none" />
          </fieldset>
        </div>
      </main>
    </div>
  );
}
